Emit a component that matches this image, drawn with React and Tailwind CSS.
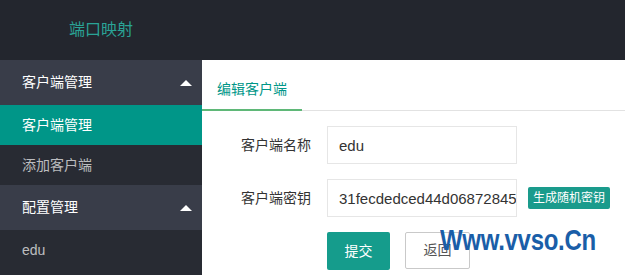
import React from "react";

const font = { fontFamily: '"Liberation Sans", "Noto Sans CJK SC", sans-serif' };

const Arrow = () => (
  <span className="ml-auto mr-[10px] w-0 h-0 border-l-[6px] border-r-[6px] border-b-[6px] border-l-transparent border-r-transparent border-b-white" />
);

const Sidebar = () => (
  <aside className="w-[202px] shrink-0 bg-[#282b33] text-[14px]">
    <div className="h-[45px] flex items-center pl-[22px] bg-[#393d49] text-white">
      客户端管理
      <Arrow />
    </div>
    <div className="h-[40px] flex items-center pl-[22px] bg-[#009688] text-white">客户端管理</div>
    <div className="h-[40px] flex items-center pl-[22px] text-white/70">添加客户端</div>
    <div className="h-[45px] flex items-center pl-[22px] bg-[#393d49] text-white">
      配置管理
      <Arrow />
    </div>
    <div className="h-[40px] flex items-center pl-[22px] text-white/70">edu</div>
  </aside>
);

const Row = ({ label, children }) => (
  <div className="flex items-center mb-[15px]">
    <label className="w-[125px] pr-[16px] text-right text-[14px] text-[#333]">{label}</label>
    {children}
  </div>
);

export default function App() {
  return (
    <div className="relative w-[625px] h-[275px] overflow-hidden bg-white flex flex-col" style={font}>
      <header className="h-[60px] shrink-0 bg-[#23262e] flex items-center">
        <div className="w-[202px] text-center text-[16px] text-[#2aa396]">端口映射</div>
      </header>
      <div className="flex flex-1 min-h-0">
        <Sidebar />
        <main className="flex-1 min-w-0">
          <div className="mt-[10px] h-[41px] flex border-b border-[#e2e2e2]">
            <div className="w-[100px] h-[41px] flex items-center justify-center text-[14px] text-[#009688] border-b-2 border-[#5fb878]">
              编辑客户端
            </div>
          </div>
          <div className="pt-[15px]">
            <Row label="客户端名称">
              <input
                readOnly
                value="edu"
                className="w-[190px] h-[38px] border border-[#e6e6e6] pl-[11px] text-[15px] text-[#333] outline-none"
                style={font}
              />
            </Row>
            <Row label="客户端密钥">
              <input
                readOnly
                value="31fecdedced44d068728453a9b"
                className="w-[190px] h-[38px] border border-[#e6e6e6] pl-[11px] text-[15px] text-[#333] outline-none"
                style={font}
              />
              <span className="ml-[11px] h-[22px] px-[5px] flex items-center rounded-[2px] bg-[#1a9b8c] text-white text-[12px]">
                生成随机密钥
              </span>
            </Row>
            <div className="flex pl-[125px]">
              <button className="h-[38px] w-[63px] rounded-[2px] bg-[#159c8c] text-white text-[14px]">提交</button>
              <button className="ml-[15px] h-[37px] w-[65px] rounded-[2px] border border-[#c9c9c9] bg-white text-[#555] text-[14px]">返回</button>
            </div>
          </div>
        </main>
      </div>
      <div className="absolute left-[440px] top-[225px] text-[24px] font-bold text-[#1a5ea8] leading-none tracking-[-0.3px] origin-top scale-y-[1.25]">
        Www.vvso.Cn
      </div>
    </div>
  );
}
